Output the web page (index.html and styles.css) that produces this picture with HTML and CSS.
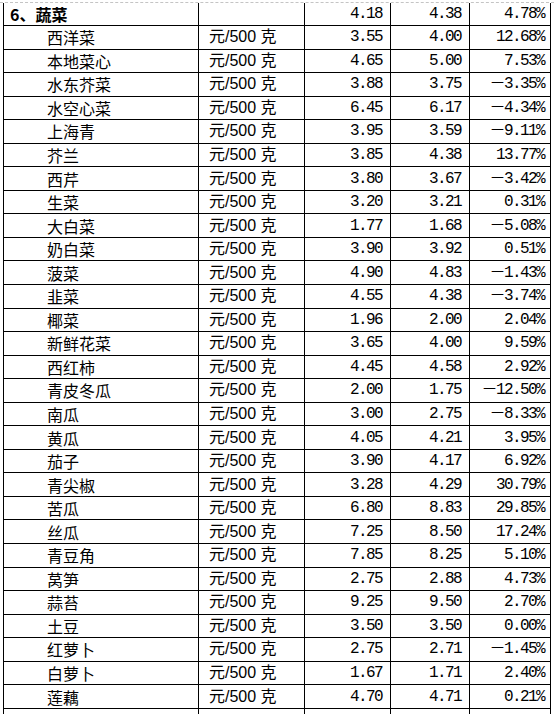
FILE: index.html
```html
<!DOCTYPE html>
<html lang="zh">
<head>
<meta charset="utf-8">
<title>蔬菜价格</title>
<link rel="stylesheet" href="styles.css">
</head>
<body>
<div class="sheet">
<table class="prices">
<colgroup>
<col class="c-name"><col class="c-unit"><col class="c-num"><col class="c-num2"><col class="c-pct">
</colgroup>
<tbody>
<tr class="group"><td class="name head">6、蔬菜</td><td class="unit"></td><td class="num">4.18</td><td class="num">4.38</td><td class="num pct">4.78%</td></tr>
<tr><td class="name">西洋菜</td><td class="unit">元/500 克</td><td class="num">3.55</td><td class="num">4.00</td><td class="num pct">12.68%</td></tr>
<tr><td class="name">本地菜心</td><td class="unit">元/500 克</td><td class="num">4.65</td><td class="num">5.00</td><td class="num pct">7.53%</td></tr>
<tr><td class="name">水东芥菜</td><td class="unit">元/500 克</td><td class="num">3.88</td><td class="num">3.75</td><td class="num pct">－3.35%</td></tr>
<tr><td class="name">水空心菜</td><td class="unit">元/500 克</td><td class="num">6.45</td><td class="num">6.17</td><td class="num pct">－4.34%</td></tr>
<tr><td class="name">上海青</td><td class="unit">元/500 克</td><td class="num">3.95</td><td class="num">3.59</td><td class="num pct">－9.11%</td></tr>
<tr><td class="name">芥兰</td><td class="unit">元/500 克</td><td class="num">3.85</td><td class="num">4.38</td><td class="num pct">13.77%</td></tr>
<tr><td class="name">西芹</td><td class="unit">元/500 克</td><td class="num">3.80</td><td class="num">3.67</td><td class="num pct">－3.42%</td></tr>
<tr><td class="name">生菜</td><td class="unit">元/500 克</td><td class="num">3.20</td><td class="num">3.21</td><td class="num pct">0.31%</td></tr>
<tr><td class="name">大白菜</td><td class="unit">元/500 克</td><td class="num">1.77</td><td class="num">1.68</td><td class="num pct">－5.08%</td></tr>
<tr><td class="name">奶白菜</td><td class="unit">元/500 克</td><td class="num">3.90</td><td class="num">3.92</td><td class="num pct">0.51%</td></tr>
<tr><td class="name">菠菜</td><td class="unit">元/500 克</td><td class="num">4.90</td><td class="num">4.83</td><td class="num pct">－1.43%</td></tr>
<tr><td class="name">韭菜</td><td class="unit">元/500 克</td><td class="num">4.55</td><td class="num">4.38</td><td class="num pct">－3.74%</td></tr>
<tr><td class="name">椰菜</td><td class="unit">元/500 克</td><td class="num">1.96</td><td class="num">2.00</td><td class="num pct">2.04%</td></tr>
<tr><td class="name">新鲜花菜</td><td class="unit">元/500 克</td><td class="num">3.65</td><td class="num">4.00</td><td class="num pct">9.59%</td></tr>
<tr><td class="name">西红柿</td><td class="unit">元/500 克</td><td class="num">4.45</td><td class="num">4.58</td><td class="num pct">2.92%</td></tr>
<tr><td class="name">青皮冬瓜</td><td class="unit">元/500 克</td><td class="num">2.00</td><td class="num">1.75</td><td class="num pct">－12.50%</td></tr>
<tr><td class="name">南瓜</td><td class="unit">元/500 克</td><td class="num">3.00</td><td class="num">2.75</td><td class="num pct">－8.33%</td></tr>
<tr><td class="name">黄瓜</td><td class="unit">元/500 克</td><td class="num">4.05</td><td class="num">4.21</td><td class="num pct">3.95%</td></tr>
<tr><td class="name">茄子</td><td class="unit">元/500 克</td><td class="num">3.90</td><td class="num">4.17</td><td class="num pct">6.92%</td></tr>
<tr><td class="name">青尖椒</td><td class="unit">元/500 克</td><td class="num">3.28</td><td class="num">4.29</td><td class="num pct">30.79%</td></tr>
<tr><td class="name">苦瓜</td><td class="unit">元/500 克</td><td class="num">6.80</td><td class="num">8.83</td><td class="num pct">29.85%</td></tr>
<tr><td class="name">丝瓜</td><td class="unit">元/500 克</td><td class="num">7.25</td><td class="num">8.50</td><td class="num pct">17.24%</td></tr>
<tr><td class="name">青豆角</td><td class="unit">元/500 克</td><td class="num">7.85</td><td class="num">8.25</td><td class="num pct">5.10%</td></tr>
<tr><td class="name">莴笋</td><td class="unit">元/500 克</td><td class="num">2.75</td><td class="num">2.88</td><td class="num pct">4.73%</td></tr>
<tr><td class="name">蒜苔</td><td class="unit">元/500 克</td><td class="num">9.25</td><td class="num">9.50</td><td class="num pct">2.70%</td></tr>
<tr><td class="name">土豆</td><td class="unit">元/500 克</td><td class="num">3.50</td><td class="num">3.50</td><td class="num pct">0.00%</td></tr>
<tr><td class="name">红萝卜</td><td class="unit">元/500 克</td><td class="num">2.75</td><td class="num">2.71</td><td class="num pct">－1.45%</td></tr>
<tr><td class="name">白萝卜</td><td class="unit">元/500 克</td><td class="num">1.67</td><td class="num">1.71</td><td class="num pct">2.40%</td></tr>
<tr><td class="name">莲藕</td><td class="unit">元/500 克</td><td class="num">4.70</td><td class="num">4.71</td><td class="num pct">0.21%</td></tr>
<tr><td class="name"></td><td class="unit"></td><td class="num"></td><td class="num"></td><td class="num pct"></td></tr>
</tbody>
</table>
</div>
</body>
</html>
```
FILE: styles.css
```css
html, body {
  margin: 0;
  padding: 0;
  background: #ffffff;
  height: 714px;
  overflow: hidden;
}
.sheet {
  margin-top: 2px;
  border-top: 1px dashed #c4c4c4;
  padding-left: 3px;
}
.prices {
  border-collapse: collapse;
  table-layout: fixed;
  width: 548px;
  font-family: "Noto Sans CJK SC", sans-serif;
  font-size: 16px;
  color: #000;
}
.c-name { width: 195px; }
.c-unit { width: 106px; }
.c-num { width: 86px; }
.c-num2 { width: 79px; }
.c-pct { width: 81px; }
.prices td {
  border: 1px solid #000;
  height: 22.55px;
  padding: 0;
  line-height: 20px;
  white-space: nowrap;
  vertical-align: middle;
}
.prices tr.group td {
  border-top: none;
  height: 22px;
}
.name {
  padding-left: 43px !important;
}
.name.head {
  padding-left: 6px !important;
  font-weight: bold;
}
.unit {
  padding-left: 10px !important;
  font-family: "Liberation Sans", "Noto Sans CJK SC", sans-serif;
}
.num {
  text-align: right;
  padding-right: 8px !important;
  font-family: "Liberation Mono", "Noto Sans CJK SC", monospace;
  letter-spacing: -1.6px;
}
.num.pct {
  padding-right: 6px !important;
}
```
